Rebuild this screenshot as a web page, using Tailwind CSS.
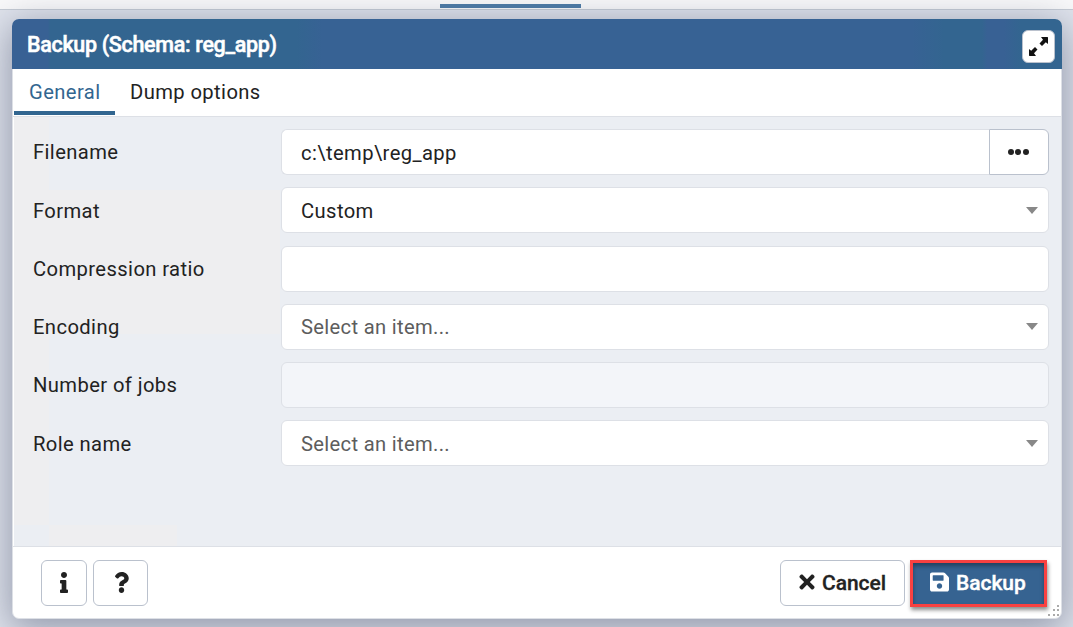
<!DOCTYPE html>
<html lang="en">
<head>
<meta charset="utf-8">
<title>Backup</title>
<script src="https://cdn.jsdelivr.net/npm/@tailwindcss/browser@4"></script>
</head>
<body class="relative h-[627px] w-[1073px] overflow-hidden bg-[#dfe3ec] font-[Roboto,sans-serif] text-[20.2px] leading-[24px] tracking-[0.4px] text-[#222222]">
<div class="flex h-[10px] items-start border-b border-[#c5cbd4] bg-[#f9f9fa] pt-1 pl-[440px]"><div class="h-1 w-[141px] bg-[#4c7ba6]"></div></div>
<main class="absolute top-[19px] left-3 flex h-[600px] w-[1050px] flex-col rounded-[7px] border border-[#dde0e6] bg-white shadow-[0_8px_36px_2px_rgba(70,78,105,0.5)]">
  <header class="-mx-px -mt-px flex h-[50px] shrink-0 items-center justify-between rounded-t-[7px] bg-[linear-gradient(90deg,#386194_0px,#386194_36px,#336590_38px,#336590_285px,#376294_310px,#376294_900px,#336590_932px,#336590_970px,#386194_975px,#386194_992px,#336590_1008px)] pr-[7px] pl-[15px] text-white">
    <h1 class="pt-0.5 text-[21.5px] font-medium tracking-[-0.32px] [-webkit-text-stroke:0.5px_white]">Backup (Schema: reg_app)</h1>
    <button class="mt-[5px] flex size-[33px] items-center justify-center rounded-[6px] border border-[#bac1cd] bg-white">
      <svg class="size-[19px]" viewBox="0 0 19 19" fill="#111"><path d="M12 0H18.5L19 .5V7L16.8 5.2 13 9 10.5 6.5 14 2.8ZM7 19H.5L0 18.5V12L2.2 13.8 6 10 8.5 12.5 5 16.2Z"/></svg>
    </button>
  </header>
  <nav class="flex h-[48px] shrink-0 border-b border-[#dde0e6] pl-px">
    <div class="h-[46px] w-[101px] border-b-4 border-[#326690] pt-[11px] pl-[15px] text-[#326690]">General</div>
    <div class="pt-[11px] pl-[15px]">Dump options</div>
  </nav>
  <section class="ml-px flex flex-1 flex-col gap-[12.3px] bg-[#ebeef3] bg-[linear-gradient(#eeeef0,#eeeef0),linear-gradient(#eeeef0,#eeeef0),linear-gradient(#eeeef0,#eeeef0)] bg-[size:35px_408px,231px_144px,128px_21px] bg-[position:0_0,35px_73px,35px_408px] bg-no-repeat pt-3 pr-3 pl-[19px]">
    <div class="flex h-[46px] items-center"><label class="w-[248px] shrink-0">Filename</label><div class="flex h-full flex-1 items-center rounded-l-[6px] border border-r-0 border-[#dde0e6] bg-white pt-0.5 pl-[19px]">c:\temp\reg_app</div><button class="flex h-full w-[60px] items-center justify-center gap-[1.5px] rounded-r-[6px] border border-[#bac1cd] bg-white pr-0.5"><span class="size-[6px] rounded-full bg-[#222]"></span><span class="size-[6px] rounded-full bg-[#222]"></span><span class="size-[6px] rounded-full bg-[#222]"></span></button></div>
    <div class="flex h-[46px] items-center"><label class="w-[248px] shrink-0 pt-0.5">Format</label><div class="flex h-full flex-1 items-center justify-between rounded-[6px] border border-[#dde0e6] bg-white pr-[10px] pl-[19px]"><span class="pt-0.5">Custom</span><svg class="h-[7px] w-3" viewBox="0 0 12 7"><path fill="#888" d="M0 0H12L6 7Z"/></svg></div></div>
    <div class="flex h-[46px] items-center"><label class="w-[248px] shrink-0">Compression ratio</label><div class="h-full flex-1 rounded-[6px] border border-[#dde0e6] bg-white"></div></div>
    <div class="flex h-[46px] items-center"><label class="w-[248px] shrink-0">Encoding</label><div class="flex h-full flex-1 items-center justify-between rounded-[6px] border border-[#dde0e6] bg-white pr-[10px] pl-[19px] tracking-[0.32px] text-[#5d5d5d]">Select an item...<svg class="h-[7px] w-3" viewBox="0 0 12 7"><path fill="#888" d="M0 0H12L6 7Z"/></svg></div></div>
    <div class="flex h-[46px] items-center"><label class="w-[248px] shrink-0">Number of jobs</label><div class="h-full flex-1 rounded-[6px] border border-[#dde0e6] bg-[#f3f5f9]"></div></div>
    <div class="flex h-[46px] items-center"><label class="w-[248px] shrink-0 pt-0.5">Role name</label><div class="flex h-full flex-1 items-center justify-between rounded-[6px] border border-[#dde0e6] bg-white pr-[10px] pl-[19px] tracking-[0.32px] text-[#5d5d5d]"><span class="pt-0.5">Select an item...</span><svg class="h-[7px] w-3" viewBox="0 0 12 7"><path fill="#888" d="M0 0H12L6 7Z"/></svg></div></div>
  </section>
  <footer class="relative flex h-[72px] shrink-0 items-start border-t border-[#dde0e6] pt-[13px] pr-[14px] pl-[28px]">
    <button class="flex h-[46px] w-[46px] items-center justify-center rounded-[6px] border border-[#bac1cd] pb-0.5"><svg class="h-[21px] w-2" viewBox="0 0 192 512" preserveAspectRatio="none" fill="#222"><path d="M20 424.229h20V279.771H20c-11.046 0-20-8.954-20-20V212c0-11.046 8.954-20 20-20h112c11.046 0 20 8.954 20 20v212.229h20c11.046 0 20 8.954 20 20V492c0 11.046-8.954 20-20 20H20c-11.046 0-20-8.954-20-20v-47.771c0-11.046 8.954-20 20-20zM96 0C56.235 0 24 32.235 24 72s32.235 72 72 72 72-32.235 72-72S135.764 0 96 0z"/></svg></button>
    <button class="ml-1.5 flex h-[46px] w-[55px] items-center justify-center rounded-[6px] border border-[#bac1cd] pb-0.5 pl-px"><svg class="h-[21px] w-[15px]" viewBox="0 0 384 512" preserveAspectRatio="none" fill="#222"><path d="M202.021 0C122.202 0 70.503 32.703 29.914 91.026c-7.363 10.58-5.093 25.086 5.178 32.874l43.138 32.709c10.373 7.865 25.132 6.026 33.253-4.148 25.049-31.381 43.63-49.449 82.757-49.449 30.764 0 68.816 19.799 68.816 49.631 0 22.552-18.617 34.134-48.993 51.164-35.423 19.86-82.299 44.576-82.299 106.405V320c0 13.255 10.745 24 24 24h72.471c13.255 0 24-10.745 24-24v-5.773c0-42.86 125.268-44.645 125.268-160.627C377.504 66.256 286.902 0 202.021 0zM192 373.459c-38.196 0-69.271 31.075-69.271 69.271 0 38.195 31.075 69.27 69.271 69.27s69.271-31.075 69.271-69.271-31.075-69.27-69.271-69.27z"/></svg></button>
    <button class="ml-auto flex h-[46px] w-[125px] items-center rounded-[6px] border border-[#bac1cd] pl-[18px] text-[21px] font-medium tracking-[-0.05px] [-webkit-text-stroke:0.3px_#222]"><svg class="mr-[7px] mb-0.5 h-[22px] w-4" viewBox="0 0 352 512" fill="#222"><path d="M242.72 256l100.07-100.07c12.28-12.28 12.28-32.19 0-44.48l-22.24-22.24c-12.28-12.28-32.19-12.28-44.48 0L176 189.28 75.93 89.21c-12.28-12.28-32.19-12.28-44.48 0L9.21 111.45c-12.28 12.28-12.28 32.19 0 44.48L109.28 256 9.21 356.07c-12.28 12.28-12.28 32.19 0 44.48l22.24 22.24c12.28 12.28 32.2 12.28 44.48 0L176 322.72l100.07 100.07c12.28 12.28 32.2 12.28 44.48 0l22.24-22.24c12.28-12.28 12.28-32.19 0-44.48L242.72 256z"/></svg>Cancel</button>
    <button class="ml-[5px] flex h-[47px] w-[137px] items-center border-[3px] border-[#f94141] bg-[#366391] pb-0.5 pl-[17px] text-[21px] font-medium tracking-[-0.05px] text-white shadow-[1px_3px_4px_rgba(0,0,0,0.45),inset_0_3px_4px_rgba(0,0,0,0.35)] [-webkit-text-stroke:0.4px_white]"><svg class="mr-[7px] mb-0.5 h-[22px] w-[19px]" viewBox="0 0 448 512" fill="white"><path d="M433.941 129.941l-83.882-83.882A48 48 0 0 0 316.118 32H48C21.49 32 0 53.49 0 80v352c0 26.51 21.49 48 48 48h352c26.51 0 48-21.49 48-48V163.882a48 48 0 0 0-14.059-33.941zM224 416c-35.346 0-64-28.654-64-64 0-35.346 28.654-64 64-64s64 28.654 64 64c0 35.346-28.654 64-64 64zm96-304.52V212c0 6.627-5.373 12-12 12H76c-6.627 0-12-5.373-12-12V108c0-6.627 5.373-12 12-12h228.52c3.183 0 6.235 1.264 8.485 3.515l3.48 3.48A11.996 11.996 0 0 1 320 111.48z"/></svg>Backup</button>
    <svg class="absolute right-px bottom-px size-3" viewBox="0 0 12 12" fill="#aaa"><path d="M9 0h2v2H9zM5 4h2v2H5zM9 4h2v2H9zM0 9h2v2H0zM5 9h2v2H5zM9 9h2v2H9z"/></svg>
  </footer>
</main>
</body>
</html>
